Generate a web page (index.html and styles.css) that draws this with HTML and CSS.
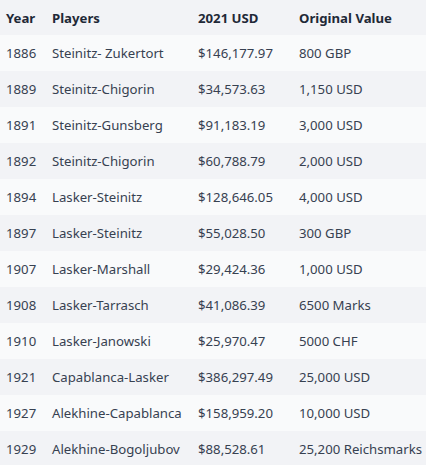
FILE: index.html
```html
<!DOCTYPE html>
<html>
<head>
<meta charset="utf-8">
<link rel="stylesheet" href="styles.css">
</head>
<body>
<table class="prize">
<colgroup>
<col class="c-year"><col class="c-players"><col class="c-usd"><col class="c-orig">
</colgroup>
<thead>
<tr><th>Year</th><th>Players</th><th>2021 USD</th><th>Original Value</th></tr>
</thead>
<tbody>
<tr><td>1886</td><td>Steinitz- Zukertort</td><td>$146,177.97</td><td>800 GBP</td></tr>
<tr><td>1889</td><td>Steinitz-Chigorin</td><td>$34,573.63</td><td>1,150 USD</td></tr>
<tr><td>1891</td><td>Steinitz-Gunsberg</td><td>$91,183.19</td><td>3,000 USD</td></tr>
<tr><td>1892</td><td>Steinitz-Chigorin</td><td>$60,788.79</td><td>2,000 USD</td></tr>
<tr><td>1894</td><td>Lasker-Steinitz</td><td>$128,646.05</td><td>4,000 USD</td></tr>
<tr><td>1897</td><td>Lasker-Steinitz</td><td>$55,028.50</td><td>300 GBP</td></tr>
<tr><td>1907</td><td>Lasker-Marshall</td><td>$29,424.36</td><td>1,000 USD</td></tr>
<tr><td>1908</td><td>Lasker-Tarrasch</td><td>$41,086.39</td><td>6500 Marks</td></tr>
<tr><td>1910</td><td>Lasker-Janowski</td><td>$25,970.47</td><td>5000 CHF</td></tr>
<tr><td>1921</td><td>Capablanca-Lasker</td><td>$386,297.49</td><td>25,000 USD</td></tr>
<tr><td>1927</td><td>Alekhine-Capablanca</td><td>$158,959.20</td><td>10,000 USD</td></tr>
<tr><td>1929</td><td>Alekhine-Bogoljubov</td><td>$88,528.61</td><td>25,200 Reichsmarks</td></tr>
</tbody>
</table>
</body>
</html>
```
FILE: styles.css
```css
html, body {
  margin: 0;
  padding: 0;
  background: #ffffff;
}
.prize {
  border-collapse: collapse;
  table-layout: fixed;
  width: 426px;
  font-family: "Noto Sans", "Open Sans", sans-serif;
  font-size: 13.2px;
  color: #374151;
}
.c-year { width: 46px; }
.c-players { width: 146px; }
.c-usd { width: 101px; }
.c-orig { width: 133px; }
.prize th, .prize td {
  padding: 0 0 0 6px;
  text-align: left;
  white-space: nowrap;
  vertical-align: middle;
}
.prize th {
  height: 35px;
  background: #f2f3f6;
  color: #1f2937;
  font-weight: 700;
}
.prize td {
  height: 36px;
}
.prize tbody tr:nth-child(odd) td { background: #f9fafb; }
.prize tbody tr:nth-child(even) td { background: #f2f3f6; }
```
